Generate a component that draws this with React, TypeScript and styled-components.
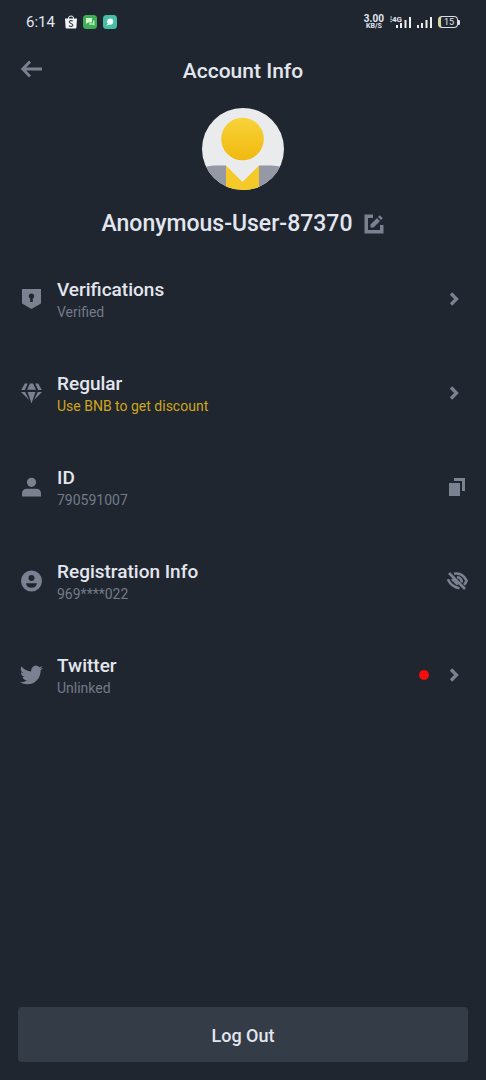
import React from 'react';
import styled, { createGlobalStyle, css } from 'styled-components';

const color = {
  page: '#1f2630',
  panel: '#333c47',
  text: '#e3e6ef',
  muted: '#737a88',
  icon: '#7a8190',
  gold: '#cfa51c',
  alert: '#f30d0d',
};

const GlobalStyle = createGlobalStyle`
  * { box-sizing: border-box; }
  body {
    margin: 0;
    background: ${color.page};
    color: ${color.text};
    font-family: Roboto, 'Liberation Sans', sans-serif;
  }
  svg { display: block; flex: none; }
`;

const Page = styled.div`
  min-height: 100vh;
  display: flex;
  flex-direction: column;
  background: ${color.page};
`;

const StatusBar = styled.div`
  height: 44px;
  padding: 0 26px;
  display: flex;
  align-items: center;
  justify-content: space-between;
`;

const StatusGroup = styled.div<{ $gap: number }>`
  display: flex;
  align-items: center;
  gap: ${(p) => p.$gap}px;
`;

const Clock = styled.span`
  font-size: 15px;
  line-height: 20px;
  margin-right: 4px;
`;

const Speed = styled.span`
  display: flex;
  flex-direction: column;
  align-items: center;
  font-size: 10px;
  font-weight: 700;
  line-height: 8px;
`;

const SpeedUnit = styled.span`
  font-size: 7px;
  line-height: 7px;
`;

const Signal = styled.span`
  display: flex;
  align-items: flex-end;
`;

const NetworkLabel = styled.span`
  align-self: flex-start;
  font-size: 8px;
  font-weight: 700;
  line-height: 8px;
  margin-right: -6px;
`;

const Battery = styled.span`
  display: flex;
  align-items: center;
`;

const BatteryBody = styled.span`
  width: 20px;
  height: 12px;
  border: 1px solid #d9dce2;
  border-left: 3px solid #d8d69a;
  border-radius: 4px;
  font-size: 9px;
  line-height: 10px;
  text-align: center;
`;

const BatteryTip = styled.span`
  width: 2px;
  height: 5px;
  background: #d9dce2;
  border-radius: 0 1px 1px 0;
`;

const Header = styled.header`
  height: 54px;
  padding: 0 20px;
  display: grid;
  grid-template-columns: 24px 1fr 24px;
  align-items: center;
`;

const Title = styled.h1`
  margin: 0;
  font-size: 21px;
  font-weight: 500;
  line-height: 28px;
  text-align: center;
`;

const IconButton = styled.button`
  padding: 0;
  border: 0;
  background: none;
  color: ${color.icon};
  cursor: pointer;
`;

const Profile = styled.section`
  padding: 10px 20px 13px;
  display: flex;
  flex-direction: column;
  align-items: center;
  gap: 19px;
`;

const NameRow = styled.div`
  display: flex;
  align-items: center;
  gap: 10px;
`;

const Name = styled.h2`
  margin: 0;
  font-size: 23px;
  font-weight: 500;
  line-height: 30px;
`;

const List = styled.ul`
  margin: 0;
  padding: 0;
  list-style: none;
`;

const rowLayout = css`
  height: 94px;
  padding: 0 18px 0 20px;
  display: flex;
  align-items: center;
  color: ${color.icon};
  text-decoration: none;
`;

const Row = styled.div`
  ${rowLayout}
`;

const RowLink = styled.a`
  ${rowLayout}
`;

const RowText = styled.div`
  flex: 1;
  margin-left: 14px;
  padding-top: 2px;
`;

const RowTitle = styled.div`
  color: ${color.text};
  font-size: 19px;
  font-weight: 500;
  line-height: 24px;
`;

const RowNote = styled.div<{ $gold?: boolean }>`
  color: ${(p) => (p.$gold ? color.gold : color.muted)};
  font-size: 14px;
  line-height: 20px;
`;

const Dot = styled.span`
  width: 10px;
  height: 10px;
  margin-right: 11px;
  border-radius: 50%;
  background: ${color.alert};
`;

const Footer = styled.footer`
  margin-top: auto;
  padding: 18px;
`;

const LogOutButton = styled.button`
  display: block;
  width: 100%;
  height: 55px;
  padding: 2px 0 0;
  border: 0;
  border-radius: 4px;
  background: ${color.panel};
  color: ${color.text};
  font-family: inherit;
  font-size: 18px;
  font-weight: 500;
  cursor: pointer;
`;

const ShopIcon = () => (
  <svg width="12" height="14" viewBox="0 0 12 14">
    <path d="M3.500 4V3a2.500 2 0 0 1 5 0v1" fill="none" stroke="#f2f4f7" strokeWidth="1" />
    <path d="M0 3.500h12l-.6 9a1 1 0 0 1-1 1H1.600a1 1 0 0 1-1-1z" fill="#f2f4f7" />
    <path d="M7.800 6.200C6.600 5.200 4.300 5.400 4.300 7c0 1.600 3.600 1.200 3.600 3 0 1.700-2.500 1.800-3.900.7" fill="none" stroke="#39404b" strokeWidth="1.100" />
  </svg>
);

const ChatAppIcon = () => (
  <svg width="14" height="14" viewBox="0 0 14 14">
    <rect width="14" height="14" rx="3.500" fill="#3fae58" />
    <path d="M3 3h6v4.500H5L3 9z" fill="#d3f5c8" />
    <path d="M10 5.500h1.500V11L10 9.800H6V8.300h4z" fill="#b4ecab" />
  </svg>
);

const BubbleAppIcon = () => (
  <svg width="14" height="14" viewBox="0 0 14 14">
    <rect width="14" height="14" rx="3.500" fill="#46bda7" />
    <circle cx="7.200" cy="6.600" r="3.100" fill="#f0fffb" />
    <path d="M5.200 8.500 3 10.600l3.500-.8z" fill="#f0fffb" />
  </svg>
);

const Bars = () => (
  <svg width="15" height="12" viewBox="0 0 15 12" fill="#eceef2">
    <rect x="0" y="9" width="2" height="3" />
    <rect x="4" y="7" width="2" height="5" />
    <rect x="8.500" y="4" width="2" height="8" />
    <rect x="13" y="1" width="2" height="11" />
  </svg>
);

const BackIcon = () => (
  <svg width="24" height="24" viewBox="0 0 24 24" fill="none" stroke="currentColor" strokeWidth="2.900">
    <path d="M22 10H3M10 2.500 2.800 10l7.200 7.500" />
  </svg>
);

const Avatar = () => (
  <svg width="82" height="82" viewBox="0 0 82 82" role="img" aria-label="Profile picture">
    <defs>
      <clipPath id="avatar-round"><circle cx="41" cy="41" r="41" /></clipPath>
      <linearGradient id="avatar-gold" x1="0" y1="0" x2="0" y2="1">
        <stop offset="0" stopColor="#f8d33a" />
        <stop offset="1" stopColor="#f0b90f" />
      </linearGradient>
    </defs>
    <g clipPath="url(#avatar-round)">
      <rect width="82" height="82" fill="#e9ebed" />
      <path d="M0 60q6-2.500 12-2.500h12V82H0zM57 57.500h12q8 0 13 2.500v22H57z" fill="#9598a5" />
      <path d="M24 57.500 40.500 74 57 57.500V82H24z" fill="#f5c928" />
      <circle cx="40.500" cy="31" r="21.300" fill="url(#avatar-gold)" />
    </g>
  </svg>
);

const EditIcon = () => (
  <svg width="22" height="22" viewBox="0 0 22 22" fill="currentColor">
    <path d="M1.500 1.500H10V5H5v12h12v-5h3.500v8.500h-19z" />
    <path d="M7.500 11.500 14 5l3 3-6.500 6.500h-3zM15 4l1.800-1.800 3 3L18 7z" />
  </svg>
);

const ShieldIcon = () => (
  <svg width="23" height="24" viewBox="0 0 23 24" fill="currentColor" fillRule="evenodd">
    <path d="M2 2h19v14.500L11.500 22 2 16.500zM11.500 6.500a2.700 2.700 0 0 0-1.300 5.100V15h2.600v-3.400a2.700 2.700 0 0 0-1.300-5.100z" />
  </svg>
);

const DiamondIcon = () => (
  <svg width="23" height="24" viewBox="0 0 23 24" fill="currentColor">
    <path d="M4.800 2.500h3L4.800 9H1.200zM10 2.500h3l3 6.200H7zM15.200 2.500h3l3.600 6.500h-3.600zM1 11h4.200l3.800 8zM7.600 11h7.800l-3.900 11.500zM17.800 11H22l-8 8z" />
  </svg>
);

const PersonIcon = () => (
  <svg width="23" height="24" viewBox="0 0 23 24" fill="currentColor">
    <circle cx="11.500" cy="7.300" r="4.600" />
    <path d="M2 21.500v-2.800q0-5 5-5h9q5 0 5 5v2.800z" />
  </svg>
);

const AccountIcon = () => (
  <svg width="23" height="24" viewBox="0 0 23 24" fill="currentColor" fillRule="evenodd">
    <path d="M11.500 1.500a10.500 10.500 0 1 0 0 21 10.500 10.500 0 0 0 0-21zM11.500 6a3 3 0 1 1 0 6 3 3 0 0 1 0-6zM6 14.200h11q-.8 4.600-5.500 4.600T6 14.200z" />
  </svg>
);

const TwitterIcon = () => (
  <svg width="23" height="24" viewBox="0 0 24 24" fill="currentColor">
    <path d="M23.950 4.570a10 10 0 0 1-2.820.780 4.960 4.960 0 0 0 2.160-2.730c-.950.560-2 .960-3.120 1.190a4.920 4.920 0 0 0-8.380 4.480C7.690 8.090 4.070 6.130 1.640 3.160a4.920 4.920 0 0 0 1.520 6.570 4.900 4.900 0 0 1-2.230-.610v.060a4.920 4.920 0 0 0 3.950 4.830 5 5 0 0 1-2.210.080 4.940 4.940 0 0 0 4.600 3.420A9.870 9.870 0 0 1 0 19.540a13.990 13.990 0 0 0 7.550 2.210c9.050 0 14-7.500 14-13.980 0-.210 0-.420-.020-.630a9.940 9.940 0 0 0 2.460-2.550z" />
  </svg>
);

const ChevronIcon = () => (
  <svg width="28" height="24" viewBox="0 0 28 24" fill="none" stroke="currentColor" strokeWidth="3.300">
    <path d="m11 6.500 5.500 5.500-5.500 5.500" />
  </svg>
);

const CopyIcon = () => (
  <svg width="22" height="24" viewBox="0 0 22 24" fill="currentColor">
    <path d="M3 8h11v13H3z" />
    <path d="M8 3h11v13h-3V6H8z" />
  </svg>
);

const EyeOffIcon = () => (
  <svg width="22" height="24" viewBox="0 0 22 24" fill="none" stroke="currentColor" strokeWidth="2.600">
    <path d="M3 4 19 20" />
    <path d="M8 4.800Q16.500 3.200 20.600 11.800 19.800 14 18 15.800" />
    <path d="M11 8q4.500.5 4.800 5.500" />
    <path d="M1.800 10.200Q5.500 18 13.500 19.200" />
    <path d="M6 9.800 11.800 15.600" />
  </svg>
);

type Item = {
  icon: React.ReactNode;
  title: string;
  note: string;
  gold?: boolean;
  dot?: boolean;
  href?: string;
  action?: { label: string; icon: React.ReactNode };
};

const items: Item[] = [
  { icon: <ShieldIcon />, title: 'Verifications', note: 'Verified', href: '#verifications' },
  { icon: <DiamondIcon />, title: 'Regular', note: 'Use BNB to get discount', gold: true, href: '#regular' },
  { icon: <PersonIcon />, title: 'ID', note: '790591007', action: { label: 'Copy ID', icon: <CopyIcon /> } },
  { icon: <AccountIcon />, title: 'Registration Info', note: '969****022', action: { label: 'Show registration info', icon: <EyeOffIcon /> } },
  { icon: <TwitterIcon />, title: 'Twitter', note: 'Unlinked', dot: true, href: '#twitter' },
];

const ItemBody = ({ item }: { item: Item }) => (
  <>
    {item.icon}
    <RowText>
      <RowTitle>{item.title}</RowTitle>
      <RowNote $gold={item.gold}>{item.note}</RowNote>
    </RowText>
    {item.dot && <Dot />}
  </>
);

export default function App() {
  return (
    <Page>
      <GlobalStyle />
      <StatusBar>
        <StatusGroup $gap={6}>
          <Clock>6:14</Clock>
          <ShopIcon />
          <ChatAppIcon />
          <BubbleAppIcon />
        </StatusGroup>
        <StatusGroup $gap={6}>
          <Speed>
            3.00
            <SpeedUnit>KB/S</SpeedUnit>
          </Speed>
          <Signal>
            <NetworkLabel>⁝4G</NetworkLabel>
            <Bars />
          </Signal>
          <Bars />
          <Battery>
            <BatteryBody>15</BatteryBody>
            <BatteryTip />
          </Battery>
        </StatusGroup>
      </StatusBar>
      <Header>
        <IconButton aria-label="Back"><BackIcon /></IconButton>
        <Title>Account Info</Title>
      </Header>
      <main>
        <Profile>
          <Avatar />
          <NameRow>
            <Name>Anonymous-User-87370</Name>
            <IconButton aria-label="Edit name"><EditIcon /></IconButton>
          </NameRow>
        </Profile>
        <List>
          {items.map((item) => (
            <li key={item.title}>
              {item.href ? (
                <RowLink href={item.href}>
                  <ItemBody item={item} />
                  <ChevronIcon />
                </RowLink>
              ) : (
                <Row>
                  <ItemBody item={item} />
                  <IconButton aria-label={item.action?.label}>{item.action?.icon}</IconButton>
                </Row>
              )}
            </li>
          ))}
        </List>
      </main>
      <Footer>
        <LogOutButton>Log Out</LogOutButton>
      </Footer>
    </Page>
  );
}
